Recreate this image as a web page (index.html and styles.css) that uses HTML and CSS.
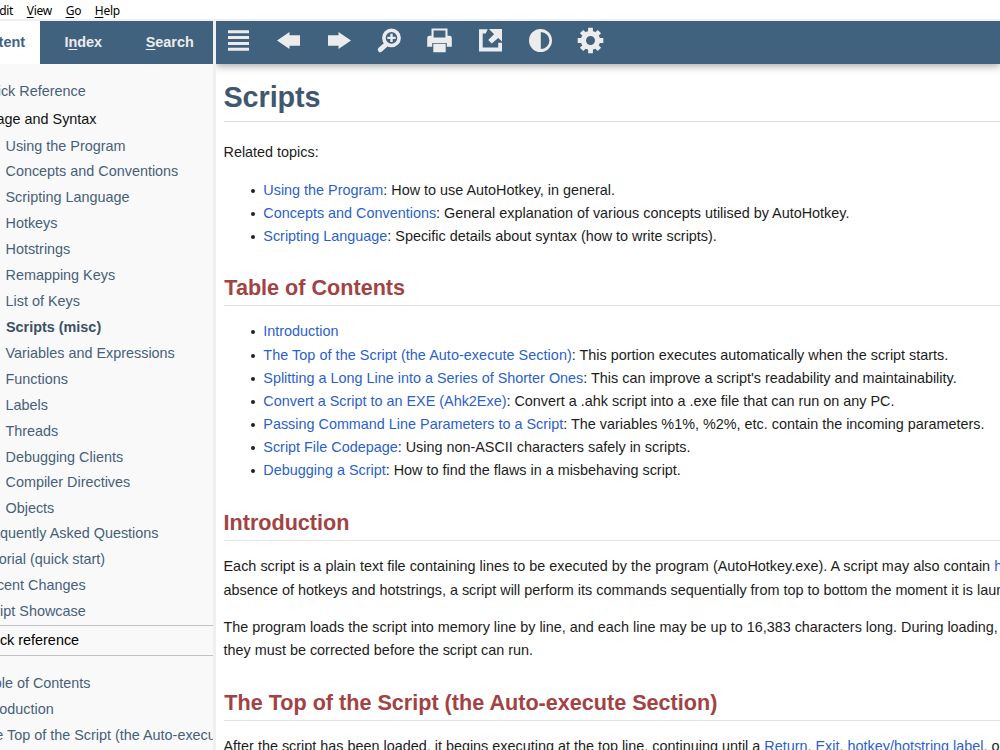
FILE: index.html
```
<!DOCTYPE html>
<html lang="en">
<head>
<meta charset="utf-8">
<title>Scripts</title>
<link rel="stylesheet" href="styles.css">
</head>
<body>
<div class="menu"><span class="edit">Edit</span><span><u>V</u>iew</span><span><u>G</u>o</span><span><u>H</u>elp</span></div>
<div class="window">
  <aside class="sidebar">
    <div class="tabs">
      <div class="tab active"><span>Content</span></div>
      <div class="tab index">I<u>n</u>dex</div>
      <div class="tab search"><u>S</u>earch</div>
    </div>
    <nav class="tree">
      <div class="row quick"><span>Quick Reference</span></div>
      <div class="row group"><span>Language and Syntax</span></div>
      <div class="children">
        <div class="row">Using the Program</div>
        <div class="row">Concepts and Conventions</div>
        <div class="row">Scripting Language</div>
        <div class="row">Hotkeys</div>
        <div class="row">Hotstrings</div>
        <div class="row">Remapping Keys</div>
        <div class="row">List of Keys</div>
        <div class="row current">Scripts (misc)</div>
        <div class="row">Variables and Expressions</div>
        <div class="row">Functions</div>
        <div class="row">Labels</div>
        <div class="row">Threads</div>
        <div class="row tight">Debugging Clients</div>
        <div class="row">Compiler Directives</div>
        <div class="row">Objects</div>
      </div>
      <div class="row">Frequently Asked Questions</div>
      <div class="row">Tutorial (quick start)</div>
      <div class="row">Recent Changes</div>
      <div class="row">Script Showcase</div>
    </nav>
    <div class="quickref">Quick reference</div>
    <nav class="tree toc">
      <div class="row">Table of Contents</div>
      <div class="row">Introduction</div>
      <div class="row">The Top of the Script (the Auto-execute Section)</div>
    </nav>
  </aside>
  <div class="splitter"></div>
  <main class="main">
    <div class="toolbar">
      <svg viewBox="-14 -14 28 28"><path d="M-10.5-8.7h21M-10.5-2.9h21M-10.5 2.9h21M-10.5 8.7h21" class="bars"/></svg>
      <svg viewBox="-14 -14 28 28"><path d="M-11.5 0L1-8.5V-5.3H11.5V5.3H1V8.5Z"/></svg>
      <svg viewBox="-14 -14 28 28"><path d="M11.5 0L-1-8.5V-5.3H-11.5V5.3H-1V8.5Z"/></svg>
      <svg viewBox="-14 -14 28 28"><circle cx="2" cy="-2.6" r="7.6" class="ring"/><path d="M2-6.8v8.4M-2.2-2.6h8.4" class="plus"/><path d="M-4 4.5L-9.2 9.2" class="handle"/></svg>
      <svg viewBox="-14 -14 28 28"><path fill-rule="evenodd" d="M-8-12H8V-4.8H10Q12.3-4.8 12.3-2.5V6.2H7.3V2.4H-7.3V6.2H-12.3V-2.5Q-12.3-4.8-10-4.8H-8ZM-5.9-9.9V-2.9H5.9V-9.9Z"/><path d="M-6.2 3.2H6.2V11.7H-6.2Z"/></svg>
      <svg viewBox="-14 -14 28 28"><path d="M-11.5-11.2H-2.8L-4.8-7H-7.8V7H7.7V2.3H11.5V11.1H-11.5Z"/><path d="M-1.5-11.4H11.5V1L7.7-2.6L1.2 3L-2.3-.6L3.6-6.3Z"/></svg>
      <svg viewBox="-14 -14 28 28"><path fill-rule="evenodd" d="M0-11.5A11.5 11.5 0 0 1 0 11.5A11.5 11.5 0 0 1 0-11.5ZM.3-8.6V8.6A8.6 8.6 0 0 0 .3-8.6Z"/></svg>
      <svg viewBox="-14 -14 28 28"><circle r="7.1" class="gear-ring"/><path class="gear-teeth" d="M0-8.6V-12.8M6.1-6.1L8.9-8.9M8.6 0H12.8M6.1 6.1L8.9 8.9M0 8.6V12.8M-6.1 6.1L-8.9 8.9M-8.6 0H-12.8M-6.1-6.1L-8.9-8.9"/></svg>
    </div>
    <article class="doc">
      <h1>Scripts</h1>
      <p class="related">Related topics:</p>
      <ul>
        <li><a>Using the Program</a>: How to use AutoHotkey, in general.</li>
        <li><a>Concepts and Conventions</a>: General explanation of various concepts utilised by AutoHotkey.</li>
        <li><a>Scripting Language</a>: Specific details about syntax (how to write scripts).</li>
      </ul>
      <h2>Table of Contents</h2>
      <ul class="contents">
        <li><a>Introduction</a></li>
        <li><a class="wider">The Top of the Script (the Auto-execute Section)</a>: This portion executes automatically when the script starts.</li>
        <li><a>Splitting a Long Line into a Series of Shorter Ones</a>: This can improve a script's readability and maintainability.</li>
        <li><a>Convert a Script to an EXE (Ahk2Exe)</a>: Convert a .ahk script into a .exe file that can run on any PC.</li>
        <li><a>Passing Command Line Parameters to a Script</a>: The variables %1%, %2%, etc. contain the incoming parameters.</li>
        <li><a>Script File Codepage</a>: Using non-ASCII characters safely in scripts.</li>
        <li><a>Debugging a Script</a>: How to find the flaws in a misbehaving script.</li>
      </ul>
      <h2 class="intro">Introduction</h2>
      <p class="first"><span class="wide">Each script is a plain text file containing lines to be executed by the program (AutoHotkey.exe). A script may also contain <a>hotkeys</a></span><br>absence of hotkeys and hotstrings, a script will perform its commands sequentially from top to bottom the moment it is launched.</p>
      <p class="second">The program loads the script into memory line by line, and each line may be up to 16,383 characters long. During loading,<br>they must be corrected before the script can run.</p>
      <h2 class="top">The Top of the Script (the Auto-execute Section)</h2>
      <p class="last">After the script has been loaded, it begins executing at the top line, continuing until a <a>Return</a>, <a>Exit</a>, <a>hotkey/hotstring label</a>, or</p>
    </article>
  </main>
</div>
</body>
</html>
```
FILE: styles.css
```
* { box-sizing: border-box; }
body {
  margin: 0;
  width: 1000px;
  height: 750px;
  overflow: hidden;
  background: #fff;
  font: 14.4px/23px "Liberation Sans", Arial, sans-serif;
  color: #1c1c1c;
}
.menu {
  display: flex;
  gap: 13.6px;
  height: 21px;
  margin-left: -7.3px;
  border-bottom: 2px solid #f0f0f0;
  font: 12px/21px "Noto Sans", sans-serif;
  letter-spacing: -0.25px;
  color: #000;
}
u { text-underline-offset: 2px; text-decoration-thickness: 1px; }
.window { display: flex; height: 729px; }
.sidebar { width: 213px; flex: none; overflow: hidden; background: #f9f9f9; white-space: nowrap; }
.tabs {
  display: flex;
  height: 43px;
  background: #40627f;
  color: #ececec;
  font-weight: bold;
  line-height: 42px;
}
.tab.active { display: flex; justify-content: flex-end; width: 40px; padding-right: 15px; background: #fff; color: #40627f; }
.tab.index { width: 87px; text-align: center; }
.tab.search { width: 87px; text-align: center; }
.tree { margin-left: -21.5px; padding-top: 14px; color: #46607a; }
.row { height: 25.87px; line-height: 26px; }
.children { padding-left: 27px; }
.quick { height: 28px; }
.group { height: 27px; color: #111; }
.group span { margin-left: -22px; }
.children .row { height: 26px; }
.children .row:first-child, .children .tight { height: 25px; }
.children .row:nth-last-child(2), .children .row:last-child { height: 25.5px; }
.current { padding-left: 0.5px; font-weight: bold; color: #3a5068; }
.quickref {
  height: 31px;
  margin-top: 1.5px;
  padding-left: 24px;
  text-indent: -46.5px;
  border: solid #c3c3c7;
  border-width: 1px 0;
  line-height: 29px;
  color: #000;
}
.splitter { width: 3px; flex: none; background: #f0f0f0; }
.main { flex: 1; min-width: 0; overflow: hidden; }
.toolbar {
  display: flex;
  gap: 22.35px;
  height: 43px;
  padding: 5px 0 0 8px;
  background: #40627f;
  box-shadow: 0 2px 8px rgba(0, 0, 0, .35);
}
.toolbar svg { width: 28px; height: 28px; flex: none; fill: #ececec; transform: translate(.5px, .5px); }
.toolbar .bars { stroke: #ececec; stroke-width: 3; }
.toolbar .ring { fill: none; stroke: #ececec; stroke-width: 3.6; }
.toolbar .plus { stroke: #ececec; stroke-width: 2.4; }
.toolbar .handle { stroke: #ececec; stroke-width: 5; stroke-linecap: round; }
.toolbar .gear-ring { fill: none; stroke: #ececec; stroke-width: 5.2; }
.toolbar .gear-teeth { stroke: #ececec; stroke-width: 4.8; }
.doc { padding-left: 7.5px; white-space: nowrap; }
h1, h2 { margin: 0; border-bottom: 1px solid #ddd; }
h1 { height: 58px; padding-top: 15px; font-size: 28.8px; line-height: 36px; letter-spacing: -0.1px; color: #3f5770; }
h2 { height: 38px; margin-top: 20px; padding-top: 2px; font-size: 21.6px; line-height: 36px; text-indent: 0.8px; border-color: #e2e2e2; color: #a34243; }
p { margin: 0; }
.related { margin-top: 19px; }
ul { list-style: none; margin: 15px 0 0; padding: 0 0 0 39.8px; }
li { height: 23px; position: relative; }
ul:not(.contents) li:last-child { height: 23.3px; }
li::before { content: ""; position: absolute; left: -12.3px; top: 10px; width: 4px; height: 4px; border-radius: 50%; background: #222; }
a { color: #2b5fcb; }
.wide { letter-spacing: 0.018px; }
.wider { letter-spacing: 0.05px; }
.contents { margin-top: 14px; }
.contents li:first-child { height: 24px; }
.intro { margin-top: 21px; text-indent: 0; }
.first { margin-top: 14px; line-height: 23.6px; }
.second { margin-top: 14px; }
.top { margin-top: 20.5px; }
.last { margin-top: 14px; }
```
